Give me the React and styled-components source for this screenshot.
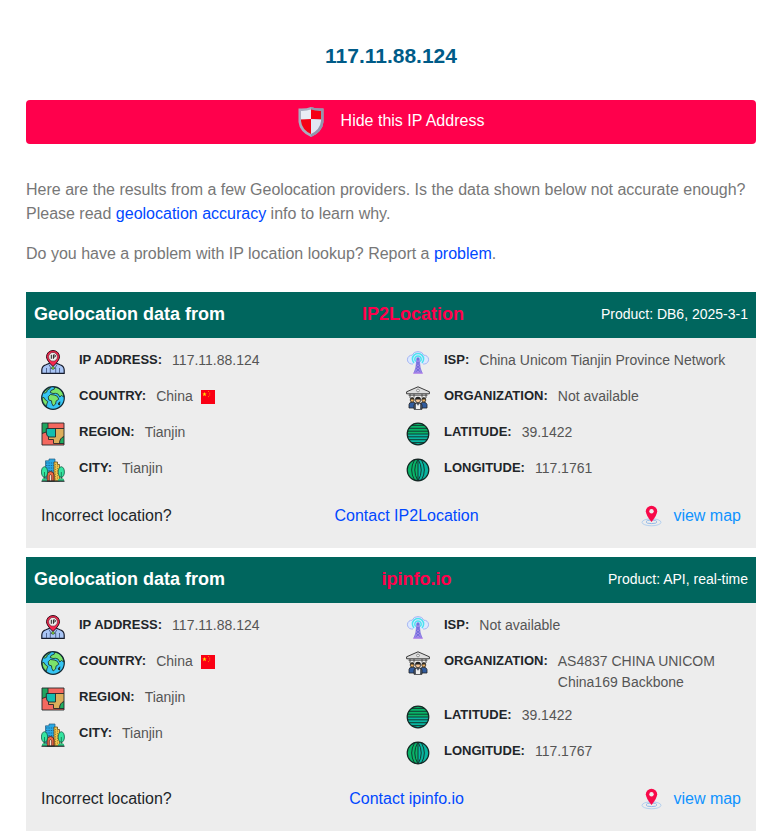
import React from "react";
import styled, { createGlobalStyle } from "styled-components";

const GlobalStyle = createGlobalStyle`
  *, *::before, *::after { box-sizing: border-box; }
  body {
    margin: 0;
    background: #fff;
    color: #777;
    font: 16px/24px "Liberation Sans", Arial, sans-serif;
  }
`;

const Page = styled.main`
  padding: 42px 19px 2px 26px;
`;

const Title = styled.h1`
  margin: 0 0 30px;
  color: #005b88;
  font-size: 21px;
  line-height: 28px;
  text-align: center;
`;

const HideButton = styled.button`
  display: flex;
  align-items: center;
  justify-content: center;
  gap: 16px;
  width: 100%;
  height: 44px;
  padding: 0;
  border: 0;
  border-radius: 4px;
  background: #ff004c;
  color: #fff;
  font: inherit;
  cursor: pointer;
`;

const HideLabel = styled.span`
  padding-bottom: 3px;
`;

const Intro = styled.div`
  margin: 34px 0 26px;
`;

const Paragraph = styled.p`
  margin: 0 0 16px;
  &:last-child { margin-bottom: 0; }
`;

const Link = styled.a`
  color: #0048ff;
  text-decoration: none;
`;

const MapLink = styled(Link)`
  display: flex;
  align-items: center;
  gap: 11px;
  color: #0f93ff;
`;

const Cards = styled.div`
  display: grid;
  gap: 9px;
`;

const Card = styled.section`
  background: #ededed;
`;

const CardHeader = styled.header`
  display: flex;
  align-items: center;
  justify-content: space-between;
  padding: 8px 8px 10px;
  background: #00665e;
  color: #fff;
  line-height: 28px;
`;

const CardTitle = styled.h2`
  margin: 0;
  font-size: 18px;
  line-height: 28px;
`;

const Provider = styled.strong`
  color: #ff004c;
  font-size: 18px;
`;

const Product = styled.span`
  font-size: 14px;
`;

const Columns = styled.div`
  display: grid;
  grid-template-columns: 1fr 1fr;
  padding-top: 12px;
`;

const Facts = styled.dl`
  margin: 0;
  padding: 0 15px;
`;

const Fact = styled.div`
  display: flex;
  align-items: flex-start;
  min-height: 24px;
  margin-bottom: 12px;
`;

const Label = styled.dt`
  flex: none;
  margin: 0 10px 0 14px;
  color: #212529;
  font-size: 13px;
  font-weight: 700;
  line-height: 20px;
`;

const Value = styled.dd`
  display: flex;
  align-items: center;
  gap: 8px;
  margin: 0;
  color: #555;
  font-size: 14px;
  line-height: 21px;
`;

const CardFooter = styled.footer`
  display: flex;
  align-items: center;
  justify-content: space-between;
  padding: 10px 15px 20px;
  color: #212529;
`;

const Svg = styled.svg`
  display: block;
  flex: none;
`;

function Shield() {
  return (
    <Svg width="27" height="32" viewBox="0 0 27 32" aria-hidden="true">
      <path d="M.5 2.5Q8 3 13 1Q18 3 25.5 2.5V16Q24.5 26 13 31Q1.5 26 .5 16Z" fill="#a9adc0" />
      <path d="M13 1Q18 3 25.5 2.5V16Q24.5 26 13 31Z" fill="#9296ad" />
      <path d="M3 5Q8.5 5.2 13 3.6V15L3 13.5Z" fill="#e9edf5" />
      <path d="M13 3.6Q17.5 5.2 23 5V13.5L13 13Z" fill="#f50014" />
      <path d="M3 13.5L13 13V28Q3.8 23.5 3 15Z" fill="#f50014" />
      <path d="M13 13L23 13.5V15Q22.2 23.5 13 28Z" fill="#e2e7f2" />
    </Svg>
  );
}

function PersonPin() {
  return (
    <Svg width="24" height="24" viewBox="0 0 24 24" aria-hidden="true">
      <path d="M.8 23.3V20Q1 16 5 14.8L9 13H15L19 14.8Q23 16 23.2 20V23.3Z" fill="#a9c5f5" stroke="#151b2b" strokeWidth="1.2" />
      <path d="M5.5 18V23M18.5 18V23M8 14.5L10.5 19L12 16.5L13.5 19L16 14.5M9.3 18V23M14.7 18V23" fill="none" stroke="#3b4d76" strokeWidth=".8" />
      <path d="M12 16.5Q5.5 10.5 5.5 6.8A6.5 6.3 0 0 1 18.5 6.8Q18.5 10.5 12 16.5Z" fill="#f5254d" stroke="#35101c" />
      <circle cx="12" cy="18" r="1.4" fill="#86dc2c" stroke="#26324d" strokeWidth=".5" />
      <circle cx="12" cy="6.8" r="4.4" fill="#eee" stroke="#6b2634" strokeWidth=".7" />
      <path d="M10.3 4.8V8.8M12.4 8.8V4.9H13.4A1 1 0 0 1 13.4 7H12.4" fill="none" stroke="#222" strokeWidth="1" />
    </Svg>
  );
}

function Globe() {
  return (
    <Svg width="24" height="24" viewBox="0 0 24 24" aria-hidden="true">
      <circle cx="12" cy="12" r="11.3" fill="#35c5f4" />
      <path d="M2.5 6.5Q5 2.2 9.5 1.2L8.5 3L6.2 4L5.8 6L3.8 7.2Z" fill="#7be36a" stroke="#152b2b" strokeWidth=".8" />
      <path d="M10 4.5L13.5 3L13 1.2Q19.5 1.5 22 7L22.8 11L20.5 9.5L18.8 11L17 8L14.5 7.3L12 7.5L9.2 6.5Z" fill="#7be36a" stroke="#152b2b" strokeWidth=".8" />
      <path d="M7.2 10.8L9.5 8.5L13.2 9L16.2 10.2L17.8 13.2L15 15.2L14.6 18L12.2 20L10.8 17.3L10.5 14.8L7.8 14Z" fill="#7be36a" stroke="#152b2b" strokeWidth=".8" />
      <path d="M.8 12L3 11.5L4.5 14L6.8 15.5L5.8 18L5.5 20.5Q1 17 .8 12Z" fill="#7be36a" stroke="#152b2b" strokeWidth=".8" />
      <path d="M17 18L18.8 15.8L18.5 19Z" fill="#7be36a" stroke="#152b2b" />
      <circle cx="12" cy="12" r="11.3" fill="none" stroke="#152b35" strokeWidth="1.2" />
    </Svg>
  );
}

function Region() {
  return (
    <Svg width="24" height="24" viewBox="0 0 24 24" aria-hidden="true">
      <path d="M1 1H23V23H1Z" fill="#f4685f" />
      <path d="M1 1H7V6.5L5.3 7V10L1 11.5Z" fill="#1fa55f" />
      <path d="M14.5 6.5H23V14.5Q18.5 16 18.5 21.5H12.5V17.5H7.5V15H14.5Z" fill="#dcae5b" />
      <path d="M5.3 6.5H14.5V15H8Q5.3 14.5 5.3 10Z" fill="#12beb0" />
      <path d="M23 14.5V22H18.5Q18.5 16 23 14.5Z" fill="#1fae60" />
      <path d="M7 1V6.5H23M14.5 6.5V15H8Q5.3 14.5 5.3 10V6.5H7M1 11.5L5.3 10M7.5 15V17.5H12.5V21.5H23M23 14.5Q18.5 16 18.5 21.5M1 1H23V23H1Z" fill="none" stroke="#25282a" strokeWidth=".9" />
    </Svg>
  );
}

function City() {
  return (
    <Svg width="24" height="24" viewBox="0 0 24 24" aria-hidden="true">
      <path d="M4.5 23V2.8H8V1H14V23Z" fill="#28a9e5" stroke="#255c80" strokeWidth=".7" />
      <path d="M5 5H13.5M5 7.5H13.5M5 10H13.5M5 12.5H13.5" stroke="#18628e" strokeWidth=".9" strokeDasharray="1.4 1" />
      <path d="M13 23V4H16.5V6.5H18.5V23Z" fill="#f0c44d" stroke="#65521e" strokeWidth=".8" />
      <path d="M14.5 6V22M16.5 7.5V22" stroke="#937424" strokeWidth=".8" strokeDasharray="1.2 1.2" />
      <path d="M6 23V17Q6 13.5 9.5 13.5Q13 13.5 13 17V23Z" fill="#ef6844" stroke="#552a21" />
      <path d="M8.3 23V17.5Q9.5 15.8 10.7 17.5V23Z" fill="#f7dfd0" stroke="#552a21" strokeWidth=".8" />
      <path d="M3.3 23V18M20.5 23V18" stroke="#543521" strokeWidth="1.5" />
      <ellipse cx="3.5" cy="14" rx="3.1" ry="5.3" fill="#35e5a0" stroke="#135c48" strokeWidth=".8" />
      <ellipse cx="20.3" cy="14" rx="3.1" ry="5.3" fill="#35e5a0" stroke="#135c48" strokeWidth=".8" />
      <path d="M3.5 14V20M20.3 14V20" stroke="#176b4b" strokeWidth=".8" />
      <path d="M1 21Q3 19.5 6 21.5V23H1ZM17 21.5Q20 19.5 23 21V23H17Z" fill="#2fc683" />
      <path d="M.5 23.2H23.5" stroke="#1c2828" strokeWidth="1.2" />
    </Svg>
  );
}

function Tower() {
  return (
    <Svg width="24" height="24" viewBox="0 0 24 24" aria-hidden="true">
      <path d="M7 14H5.5A4.2 4.2 0 0 1 6.2 5.2A6.1 5.3 0 0 1 17.8 5.2A4.4 4.4 0 0 1 18.5 14H17" fill="#dce9ff" stroke="#9eaff3" strokeWidth=".9" />
      <path d="M8 13A5.6 5.6 0 1 1 16 13M9.8 11.5A3.2 3.2 0 1 1 14.2 11.5" fill="none" stroke="#4ce2f0" strokeWidth="1.5" />
      <path d="M11 9H13L14.2 18L16 23H8L9.8 18Z" fill="#a58bea" stroke="#776dde" strokeWidth=".8" />
      <path d="M11 12L13.5 15.5L10.2 18.5L14.5 22M13 12L10.5 15.5L13.8 18.5L9.5 22" fill="none" stroke="#5a62d4" strokeWidth=".7" />
      <circle cx="12" cy="8.8" r="1.6" fill="#6a75df" />
      <path d="M7 23.2H17" stroke="#bd8bea" strokeWidth="1.1" />
    </Svg>
  );
}

function Organization() {
  return (
    <Svg width="24" height="24" viewBox="0 0 24 24" aria-hidden="true">
      <path d="M.6 5.8L12 .8L23.4 5.8V7.8H.6Z" fill="#dedede" stroke="#292929" strokeWidth=".9" />
      <circle cx="12" cy="4.5" r="1.4" fill="#f8f8f8" stroke="#555" strokeWidth=".6" />
      <path d="M2.5 9.2H21.5M4 8V12M8 8V11.5M16 8V11.5M20 8V12" stroke="#444" strokeWidth=".9" />
      <path d="M3 22V18.5Q3 16.2 6.5 16.2T9.5 18.5V22ZM14.5 22V18.5Q14.5 16.2 17.5 16.2T21 18.5V22Z" fill="#315c9f" stroke="#252525" strokeWidth=".8" />
      <circle cx="6.2" cy="14" r="2" fill="#efb363" stroke="#28231d" strokeWidth=".8" />
      <circle cx="17.8" cy="14" r="2" fill="#efb363" stroke="#28231d" strokeWidth=".8" />
      <path d="M8 23.3V19Q8 16.8 12 16.8T16 19V23.3Z" fill="#596270" stroke="#222" strokeWidth=".8" />
      <path d="M10 17.2L12 19.8L14 17.2V23H10Z" fill="#eee" />
      <circle cx="12" cy="14.3" r="2.5" fill="#f4c69a" stroke="#222" strokeWidth=".8" />
      <path d="M9.2 13.5Q9 10.7 12 10.7T14.8 13.5Z" fill="#222" />
      <path d="M4 13.5Q4 11.3 6.2 11.3T8.4 13.5ZM15.6 13.5Q15.6 11.3 17.8 11.3T20 13.5Z" fill="#343029" />
    </Svg>
  );
}

function Latitude() {
  return (
    <Svg width="24" height="24" viewBox="0 0 24 24" aria-hidden="true">
      <path d="M1 12A11 11 0 0 1 23 12Z" fill="#08b568" />
      <path d="M1 12A11 11 0 0 0 23 12Z" fill="#08b5a0" />
      <path d="M6 3.4H18M3 6.3H21M1.5 9.2H22.5M1 12H23M1.5 14.8H22.5M3 17.7H21M6 20.6H18" stroke="#123b32" strokeWidth="1" />
      <circle cx="12" cy="12" r="10.8" fill="none" stroke="#172624" strokeWidth="1.2" />
    </Svg>
  );
}

function Longitude() {
  return (
    <Svg width="24" height="24" viewBox="0 0 24 24" aria-hidden="true">
      <path d="M12 1A11 11 0 0 0 12 23Z" fill="#08b568" />
      <path d="M12 1A11 11 0 0 1 12 23Z" fill="#08b5a0" />
      <path d="M12 1V23M12 1Q5.5 12 12 23M12 1Q18.5 12 12 23M8.5 2Q2.8 12 8.5 22M15.5 2Q21.2 12 15.5 22" fill="none" stroke="#123b32" strokeWidth="1" />
      <circle cx="12" cy="12" r="10.8" fill="none" stroke="#172624" strokeWidth="1.2" />
    </Svg>
  );
}

function Flag() {
  return (
    <Svg width="14" height="14" viewBox="0 0 14 14" role="img" aria-label="Flag of China">
      <path d="M0 0H14V14H0Z" fill="#fa0014" />
      <path d="M3.5 2L4.1 3.6H5.6L4.4 4.6L4.9 6.2L3.5 5.2L2.1 6.2L2.6 4.6L1.4 3.6H2.9Z" fill="#ffe000" />
      <path d="M7 1.5H8M8.2 3.2H9.2M8.2 5H9.2M7 6.6H8" stroke="#ff9800" strokeWidth=".8" />
    </Svg>
  );
}

function MapPin() {
  return (
    <Svg width="21" height="24" viewBox="0 0 21 24" aria-hidden="true">
      <ellipse cx="10.5" cy="18.3" rx="9.5" ry="3.5" fill="none" stroke="#b3d0ef" />
      <ellipse cx="10.5" cy="17.8" rx="5.5" ry="1.8" fill="none" stroke="#91b9e9" />
      <path d="M10.5 18Q4.8 10.8 4.8 7.2A5.7 5.4 0 0 1 16.2 7.2Q16.2 10.8 10.5 18Z" fill="#f80a4a" />
      <circle cx="10.5" cy="7.2" r="2.2" fill="#ededed" />
    </Svg>
  );
}

const providers = [
  {
    name: "IP2Location",
    product: "DB6, 2025-3-1",
    isp: "China Unicom Tianjin Province Network",
    organization: "Not available",
    longitude: "117.1761",
  },
  {
    name: "ipinfo.io",
    product: "API, real-time",
    isp: "Not available",
    organization: "AS4837 CHINA UNICOM China169 Backbone",
    longitude: "117.1767",
  },
];

function FactRow({ icon, label, children }) {
  return (
    <Fact>
      {icon}
      <Label>{label}:</Label>
      <Value>{children}</Value>
    </Fact>
  );
}

function ProviderCard({ data }) {
  return (
    <Card>
      <CardHeader>
        <CardTitle>Geolocation data from</CardTitle>
        <Provider>{data.name}</Provider>
        <Product>Product: {data.product}</Product>
      </CardHeader>
      <Columns>
        <Facts>
          <FactRow icon={<PersonPin />} label="IP ADDRESS">117.11.88.124</FactRow>
          <FactRow icon={<Globe />} label="COUNTRY">China <Flag /></FactRow>
          <FactRow icon={<Region />} label="REGION">Tianjin</FactRow>
          <FactRow icon={<City />} label="CITY">Tianjin</FactRow>
        </Facts>
        <Facts>
          <FactRow icon={<Tower />} label="ISP">{data.isp}</FactRow>
          <FactRow icon={<Organization />} label="ORGANIZATION">{data.organization}</FactRow>
          <FactRow icon={<Latitude />} label="LATITUDE">39.1422</FactRow>
          <FactRow icon={<Longitude />} label="LONGITUDE">{data.longitude}</FactRow>
        </Facts>
      </Columns>
      <CardFooter>
        <span>Incorrect location?</span>
        <Link href="#contact">Contact {data.name}</Link>
        <MapLink href="#map"><MapPin />view map</MapLink>
      </CardFooter>
    </Card>
  );
}

export default function App() {
  return (
    <>
      <GlobalStyle />
      <Page>
        <Title>117.11.88.124</Title>
        <HideButton type="button">
          <Shield />
          <HideLabel>Hide this IP Address</HideLabel>
        </HideButton>
        <Intro>
          <Paragraph>
            Here are the results from a few Geolocation providers. Is the data shown below not
            accurate enough? Please read <Link href="#accuracy">geolocation accuracy</Link> info to
            learn why.
          </Paragraph>
          <Paragraph>
            Do you have a problem with IP location lookup? Report a <Link href="#problem">problem</Link>.
          </Paragraph>
        </Intro>
        <Cards>
          {providers.map((data) => <ProviderCard key={data.name} data={data} />)}
        </Cards>
      </Page>
    </>
  );
}
